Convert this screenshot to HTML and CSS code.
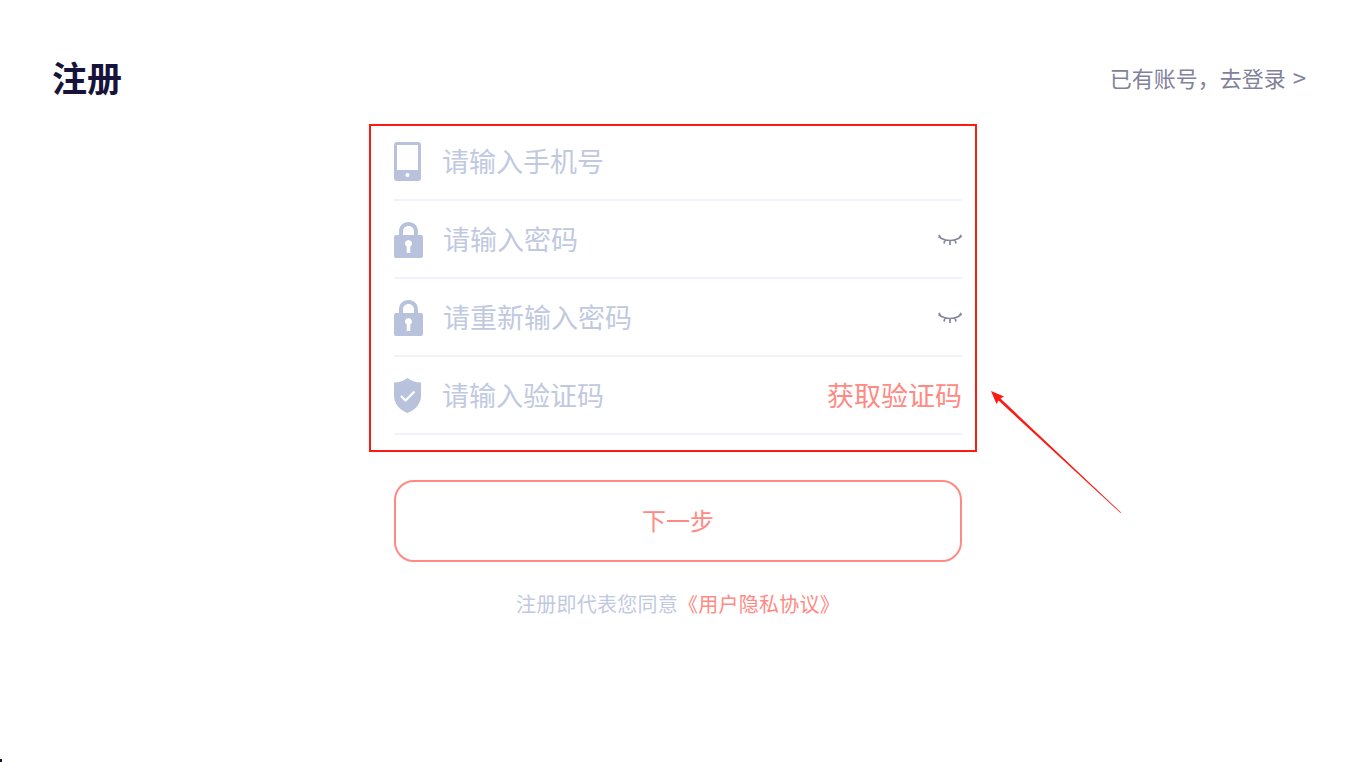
FILE: index.html
```html
<!DOCTYPE html>
<html lang="zh">
<head>
<meta charset="utf-8">
<title>注册</title>
<link rel="stylesheet" href="styles.css">
</head>
<body>
<div class="page">
  <header class="top">
    <h1 class="title">注册</h1>
    <a class="login">已有账号，去登录 <span class="chev">&gt;</span></a>
  </header>
  <form class="form">
    <div class="row">
      <svg class="icon phone" viewBox="0 0 27 39"><path fill="#b8c2dc" fill-rule="evenodd" d="M3 0h21a3 3 0 0 1 3 3v33a3 3 0 0 1-3 3H3a3 3 0 0 1-3-3V3a3 3 0 0 1 3-3zm0 3v25h21V3zm10.500 28a2 2 0 1 0 0 4 2 2 0 0 0 0-4z"/></svg>
      <span class="ph">请输入手机号</span>
    </div>
    <div class="row">
      <svg class="icon lock" viewBox="0 0 29 36"><path fill="#b8c2dc" fill-rule="evenodd" d="M14.500 0C20 0 24 4 24 9.500V13h3a2 2 0 0 1 2 2v19a2 2 0 0 1-2 2H2a2 2 0 0 1-2-2V15a2 2 0 0 1 2-2h3V9.500C5 4 9 0 14.500 0zm0 4C11 4 9 6.500 9 9.500V13h11V9.500C20 6.500 18 4 14.500 4zm0 14a3.500 3.500 0 0 0-1.800 6.500V31h3.600v-6.500A3.500 3.500 0 0 0 14.500 18z"/></svg>
      <span class="ph">请输入密码</span>
      <svg class="eye" viewBox="0 0 24 12"><path fill="none" stroke="#84869f" stroke-width="1.700" d="M.5 2.500l3 2c5 2.500 12 2.500 17 0l3-2.500M1 .8l1.500 3M23 .8l-1.500 3M7 6l-1 3.500M12 7v4M17 6l1 3.500"/></svg>
    </div>
    <div class="row">
      <svg class="icon lock" viewBox="0 0 29 36"><path fill="#b8c2dc" fill-rule="evenodd" d="M14.500 0C20 0 24 4 24 9.500V13h3a2 2 0 0 1 2 2v19a2 2 0 0 1-2 2H2a2 2 0 0 1-2-2V15a2 2 0 0 1 2-2h3V9.500C5 4 9 0 14.500 0zm0 4C11 4 9 6.500 9 9.500V13h11V9.500C20 6.500 18 4 14.500 4zm0 14a3.500 3.500 0 0 0-1.800 6.500V31h3.600v-6.500A3.500 3.500 0 0 0 14.500 18z"/></svg>
      <span class="ph">请重新输入密码</span>
      <svg class="eye" viewBox="0 0 24 12"><path fill="none" stroke="#84869f" stroke-width="1.700" d="M.5 2.500l3 2c5 2.500 12 2.500 17 0l3-2.500M1 .8l1.500 3M23 .8l-1.500 3M7 6l-1 3.500M12 7v4M17 6l1 3.500"/></svg>
    </div>
    <div class="row">
      <svg class="icon shield" viewBox="0 0 27 35"><path fill="#b8c2dc" d="M13.500 0c3 2.500 8 4.500 13.500 4.500V18c0 8-6 14-13.500 17C6 32 0 26 0 18V4.500C5.500 4.500 10.500 2.500 13.500 0z"/><path fill="none" stroke="#fff" stroke-width="2.200" d="M7 18l4.500 4.500 9-9"/></svg>
      <span class="ph">请输入验证码</span>
      <a class="code">获取验证码</a>
    </div>
  </form>
  <button class="next" type="button">下一步</button>
  <p class="agree">注册即代表您同意<a class="link">《用户隐私协议》</a></p>
  <div class="mark"></div>
  <svg class="arrow" viewBox="0 0 136 128"><path fill="#fb1b12" d="M1 1 14 6.500 10.500 8.500 131 122.500 130.500 123 8.500 10.500 6.500 14z"/></svg>
  <div class="corner"></div>
</div>
</body>
</html>
```
FILE: styles.css
```css
html, body {
  margin: 0;
  padding: 0;
  background: #fff;
}
.page {
  position: relative;
  width: 1356px;
  height: 762px;
  overflow: hidden;
  font-family: "Noto Sans CJK SC", "Noto Sans", sans-serif;
}
.top {
  display: flex;
  justify-content: space-between;
  align-items: center;
  height: 123px;
  padding: 32px 50px 0 52px;
  box-sizing: border-box;
}
.title {
  margin: 0 0 1px;
  font-size: 35px;
  font-weight: 700;
  color: #17133a;
  line-height: 48px;
}
.login {
  display: flex;
  align-items: center;
  gap: 7px;
  margin-bottom: 1px;
  font-size: 22px;
  color: #81819b;
}
.chev {
  font-size: 24px;
  line-height: 1;
}
.form {
  width: 568px;
  margin: 0 auto;
}
.row {
  display: flex;
  align-items: center;
  height: 78px;
  box-sizing: border-box;
  border-bottom: 2px solid #f1f2fb;
}
.icon {
  flex: none;
}
.phone {
  width: 27px;
  height: 39px;
  margin-top: 1px;
  margin-right: 21px;
}
.lock {
  width: 29px;
  height: 36px;
  margin-top: 2px;
  margin-right: 20px;
}
.shield {
  width: 27px;
  height: 35px;
  margin-right: 21px;
}
.ph {
  flex: 1;
  margin-bottom: 2px;
  font-size: 27px;
  color: #c1c9e1;
}
.eye {
  width: 24px;
  height: 12px;
  margin-top: 2px;
}
.code {
  margin-bottom: 2px;
  font-size: 27px;
  color: #ff8a84;
}
.next {
  display: block;
  width: 568px;
  height: 82px;
  margin: 45px auto 0;
  padding: 0 0 4px;
  background: #fff;
  border: 2px solid #ff8a84;
  border-radius: 20px;
  font-family: inherit;
  font-size: 24px;
  color: #ff8a84;
}
.agree {
  margin: 27px 0 0;
  text-align: center;
  font-size: 20px;
  letter-spacing: 0.25px;
  color: #c1c9e1;
}
.link {
  color: #ff8a84;
}
.mark {
  position: absolute;
  left: 369px;
  top: 124px;
  width: 604px;
  height: 324px;
  border: 2px solid #fb1b12;
}
.arrow {
  position: absolute;
  left: 990px;
  top: 390px;
  width: 136px;
  height: 128px;
}
.corner {
  position: absolute;
  left: 0;
  top: 759px;
  width: 2px;
  height: 3px;
  background: #17133a;
}
```
